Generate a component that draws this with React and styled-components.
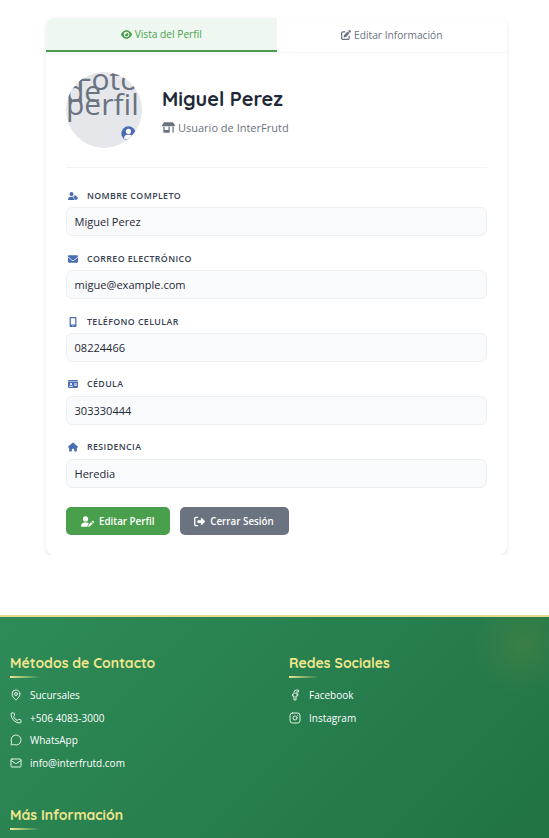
import React from 'react';
import styled, { createGlobalStyle } from 'styled-components';
import {
  FaEye, FaPenToSquare, FaShop, FaUserTag, FaEnvelope,
  FaMobileScreenButton, FaIdCard, FaHouse, FaUserPen, FaRightFromBracket,
} from 'react-icons/fa6';
import { MapPin, Phone, MessageCircle, Mail, Facebook, Instagram } from 'lucide-react';

const heading = "Quicksand, Lato, sans-serif";

const GlobalStyle = createGlobalStyle`
  *, *::before, *::after { box-sizing: border-box; }
  body {
    margin: 0;
    background: #fff;
    font-family: "Open Sans", sans-serif;
    color: #1f2937;
  }
  svg { flex: none; display: block; }
`;

const Page = styled.div`
  height: 838px;
  overflow: hidden;
  display: flex;
  flex-direction: column;
`;

const Main = styled.main`
  height: 555px;
  flex: none;
  padding: 18px 42px 0 46px;
  overflow: hidden;
`;

const Card = styled.section`
  width: 461px;
  height: 537px;
  border-radius: 8px;
  background: #fff;
  overflow: hidden;
  box-shadow: 0 2px 4px rgba(0, 0, 0, 0.1);
`;

const Tabs = styled.nav`
  display: flex;
  height: 35px;
  border-bottom: 1px solid #f3f4f6;
`;

const Tab = styled.button`
  flex: 1;
  display: flex;
  align-items: center;
  justify-content: center;
  gap: 3px;
  height: 34px;
  padding: 0;
  border: 0;
  border-bottom: ${(p) => (p.$active ? '2px solid #4a9f4c' : '0')};
  background: ${(p) => (p.$active ? '#eef8f0' : '#fff')};
  color: ${(p) => (p.$active ? '#4a9f4c' : '#6b7280')};
  font: 500 10.2px/16px "Open Sans", sans-serif;
`;

const Body = styled.div`
  padding: 19px 20px 0;
`;

const ProfileHeader = styled.header`
  display: flex;
  align-items: center;
  gap: 20px;
  height: 96px;
  padding-bottom: 20px;
  border-bottom: 1px solid #f3f4f6;
`;

const Avatar = styled.div`
  position: relative;
  flex: none;
  width: 76px;
  height: 76px;
  border-radius: 50%;
  overflow: hidden;
  background: #e5e7eb;
  color: #6b7280;
  font-size: 30px;
  line-height: 12.5px;
`;

const AvatarText = styled.div`
  padding-top: 1px;
  margin-right: -10px;
  text-indent: 10px;
  white-space: nowrap;

  span {
    display: block;
    text-indent: 0;
  }
`;

const Badge = styled.span`
  position: absolute;
  right: 6px;
  bottom: 7px;
  display: flex;
`;

const Identity = styled.div`
  display: flex;
  flex-direction: column;
  gap: 7px;
  padding-top: 2px;
`;

const Name = styled.h1`
  margin: 0;
  font: 700 19.9px/26px ${heading};
  color: #1f2937;
`;

const Role = styled.p`
  display: flex;
  align-items: center;
  gap: 3px;
  margin: 0;
  font-size: 11px;
  line-height: 17px;
  color: #6b7280;
`;

const Fields = styled.dl`
  display: grid;
  grid-auto-rows: 42px;
  row-gap: 20.8px;
  margin: 0;
  padding-top: 26.45px;
`;

const Label = styled.dt`
  display: flex;
  align-items: center;
  height: 13px;
  margin-top: -5px;
  margin-bottom: 4.9px;
  font-size: 8.8px;
  font-weight: 600;
  letter-spacing: 0.4px;
  text-transform: uppercase;
  color: #374151;
`;

const IconSlot = styled.span`
  display: flex;
  justify-content: center;
  width: 13px;
  margin-right: 8px;
  color: #4a6cb3;
`;

const Value = styled.dd`
  margin: 0;
  height: 29px;
  padding: 0 7.5px;
  border: 1px solid #edf0f3;
  border-radius: 6px;
  background: #f9fafb;
  color: #1f2937;
  font-size: 11.05px;
  line-height: 28px;
`;

const Actions = styled.div`
  display: flex;
  gap: 10px;
  padding-top: 19.5px;
`;

const Button = styled.button`
  display: flex;
  align-items: center;
  justify-content: center;
  gap: 5px;
  width: ${(p) => p.$width}px;
  height: 28px;
  padding: 1px 0 0;
  border: 0;
  border-radius: 5px;
  background: ${(p) => p.$color};
  color: #fff;
  font: 600 9.8px/16px "Open Sans", sans-serif;
`;

const Footer = styled.footer`
  flex: 1;
  margin-top: 60px;
  border-top: 2px solid #e2dc8c;
  padding: 35px 10px 0;
  display: grid;
  grid-template-columns: 1fr 1fr;
  column-gap: 29px;
  grid-template-rows: 152px auto;
  align-items: start;
  background:
    radial-gradient(circle at 523px 28px, rgba(218, 165, 32, 0.12), rgba(218, 165, 32, 0) 52px),
    linear-gradient(135deg, #2e8b57 0, #217346 530px);
`;

const Title = styled.h2`
  margin: 0;
  height: 26px;
  font: 700 14px/22px ${heading};
  color: #f0e68c;

  &::after {
    content: "";
    display: block;
    margin-top: 2px;
    width: 30px;
    height: 2px;
    background: linear-gradient(90deg, #f0e68c, rgba(240, 230, 140, 0));
  }
`;

const Links = styled.ul`
  list-style: none;
  margin: 0;
  padding: 6px 0 0;
`;

const LinkItem = styled.li`
  display: flex;
  align-items: center;
  gap: 8px;
  height: 22.6px;
  font-size: 10px;
  color: #fff;

  svg { color: #e3f1e8; }
`;

const UserBadgeIcon = () => (
  <svg width="15" height="15" viewBox="0 0 15 15">
    <circle cx="7.5" cy="7.5" r="7.2" fill="#4a6cb3" />
    <circle cx="7.5" cy="5.3" r="2.6" fill="#fff" />
    <path d="M3 12.2C3.2 9.9 4.6 8.7 6.2 8.7h2.6c1.6 0 3 1.2 3.2 3.5-1.2 1.1-2.7 1.7-4.5 1.7S4.2 13.3 3 12.2z" fill="#fff" />
  </svg>
);

const fields = [
  ['Nombre Completo', 'Miguel Perez', FaUserTag],
  ['Correo Electrónico', 'migue@example.com', FaEnvelope],
  ['Teléfono Celular', '08224466', FaMobileScreenButton],
  ['Cédula', '303330444', FaIdCard],
  ['Residencia', 'Heredia', FaHouse],
];

const columns = [
  ['Métodos de Contacto', [
    ['Sucursales', MapPin], ['+506 4083-3000', Phone],
    ['WhatsApp', MessageCircle], ['info@interfrutd.com', Mail],
  ]],
  ['Redes Sociales', [['Facebook', Facebook], ['Instagram', Instagram]]],
  ['Más Información', []],
];

export default function App() {
  return (
    <Page>
      <GlobalStyle />
      <Main>
        <Card>
          <Tabs>
            <Tab $active><FaEye size={11} />Vista del Perfil</Tab>
            <Tab><FaPenToSquare size={10} />Editar Información</Tab>
          </Tabs>
          <Body>
            <ProfileHeader>
              <Avatar>
                <AvatarText>Foto<span>de</span><span>perfil</span></AvatarText>
                <Badge><UserBadgeIcon /></Badge>
              </Avatar>
              <Identity>
                <Name>Miguel Perez</Name>
                <Role><FaShop size={13} />Usuario de InterFrutd</Role>
              </Identity>
            </ProfileHeader>
            <Fields>
              {fields.map(([label, value, Icon]) => (
                <div key={label}>
                  <Label><IconSlot><Icon size={10} /></IconSlot>{label}</Label>
                  <Value>{value}</Value>
                </div>
              ))}
            </Fields>
            <Actions>
              <Button $width={103.5} $color="#4a9f4c"><FaUserPen size={13} />Editar Perfil</Button>
              <Button $width={109} $color="#6b7280"><FaRightFromBracket size={11} />Cerrar Sesión</Button>
            </Actions>
          </Body>
        </Card>
      </Main>
      <Footer>
        {columns.map(([title, links]) => (
          <div key={title}>
            <Title>{title}</Title>
            <Links>
              {links.map(([text, Icon]) => (
                <LinkItem key={text}><Icon size={12} strokeWidth={2} />{text}</LinkItem>
              ))}
            </Links>
          </div>
        ))}
      </Footer>
    </Page>
  );
}
